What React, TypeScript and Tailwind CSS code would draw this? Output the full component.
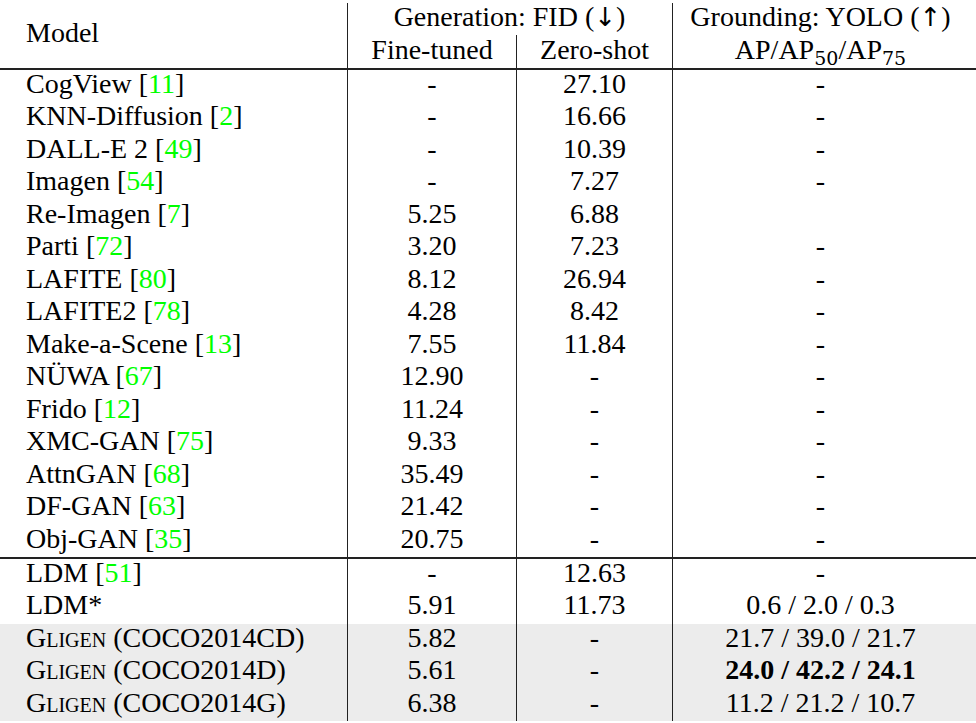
import React from 'react';

type Row = {
  name: React.ReactNode;
  cite?: string;
  fine: string;
  zero: string;
  ground: string;
  bold?: boolean;
};

const baselines: Row[] = [
  { name: 'CogView', cite: '11', fine: '-', zero: '27.10', ground: '-' },
  { name: 'KNN-Diffusion', cite: '2', fine: '-', zero: '16.66', ground: '-' },
  { name: 'DALL-E 2', cite: '49', fine: '-', zero: '10.39', ground: '-' },
  { name: 'Imagen', cite: '54', fine: '-', zero: '7.27', ground: '-' },
  { name: 'Re-Imagen', cite: '7', fine: '5.25', zero: '6.88', ground: '' },
  { name: 'Parti', cite: '72', fine: '3.20', zero: '7.23', ground: '-' },
  { name: 'LAFITE', cite: '80', fine: '8.12', zero: '26.94', ground: '-' },
  { name: 'LAFITE2', cite: '78', fine: '4.28', zero: '8.42', ground: '-' },
  { name: 'Make-a-Scene', cite: '13', fine: '7.55', zero: '11.84', ground: '-' },
  { name: 'NÜWA', cite: '67', fine: '12.90', zero: '-', ground: '-' },
  { name: 'Frido', cite: '12', fine: '11.24', zero: '-', ground: '-' },
  { name: 'XMC-GAN', cite: '75', fine: '9.33', zero: '-', ground: '-' },
  { name: 'AttnGAN', cite: '68', fine: '35.49', zero: '-', ground: '-' },
  { name: 'DF-GAN', cite: '63', fine: '21.42', zero: '-', ground: '-' },
  { name: 'Obj-GAN', cite: '35', fine: '20.75', zero: '-', ground: '-' },
];

const ldm: Row[] = [
  { name: 'LDM', cite: '51', fine: '-', zero: '12.63', ground: '-' },
  { name: 'LDM*', fine: '5.91', zero: '11.73', ground: '0.6 / 2.0 / 0.3' },
];

const ours: Row[] = [
  { name: <><span className="[font-variant:small-caps]">Gligen</span> (COCO2014CD)</>, fine: '5.82', zero: '-', ground: '21.7 / 39.0 / 21.7' },
  { name: <><span className="[font-variant:small-caps]">Gligen</span> (COCO2014D)</>, fine: '5.61', zero: '-', ground: '24.0 / 42.2 / 24.1', bold: true },
  { name: <><span className="[font-variant:small-caps]">Gligen</span> (COCO2014G)</>, fine: '6.38', zero: '-', ground: '11.2 / 21.2 / 10.7' },
];

function TableRow({ row, shaded }: { row: Row; shaded?: boolean }) {
  return (
    <div
      className={`grid grid-cols-[348px_169px_156px_303px] h-[32.5px] leading-[27px] ${shaded ? 'bg-[#ececec]' : ''}`}
    >
      <div className="pl-[26px] border-r-[1.5px] border-[#222] whitespace-nowrap">
        {row.name}
        {row.cite && (
          <>
            {' '}[<span className="text-[#00ff00]">{row.cite}</span>]
          </>
        )}
      </div>
      <div className="text-center border-r-[1.5px] border-[#222]">{row.fine}</div>
      <div className="text-center border-r-[1.5px] border-[#222]">{row.zero}</div>
      <div className={`text-center pr-[8px] ${row.bold ? 'font-bold' : ''}`}>{row.ground}</div>
    </div>
  );
}

function Arrow({ children }: { children: React.ReactNode }) {
  return <span className="font-['DejaVu_Sans',sans-serif] text-[26px]">{children}</span>;
}

export default function App() {
  return (
    <div className="w-[976px] h-[723px] bg-white text-black font-['Liberation_Serif','DejaVu_Serif',serif] text-[28px] pt-[3px] overflow-hidden">
      {/* Header */}
      <div className="grid grid-cols-[348px_169px_156px_303px] grid-rows-[32px_33px] leading-[27px]">
        <div className="row-span-2 pl-[26px] border-r-[1.5px] border-[#222] flex items-center pb-[6px]">Model</div>
        <div className="col-span-2 text-center border-r-[1.5px] border-[#222] pr-[1px]">
          Generation: FID (<Arrow>↓</Arrow>)
        </div>
        <div className="text-center pr-[8px]">
          Grounding: YOLO (<Arrow>↑</Arrow>)
        </div>
        <div className="text-center border-r-[1.5px] border-[#222] pt-[1px]">Fine-tuned</div>
        <div className="text-center border-r-[1.5px] border-[#222] pt-[1px]">Zero-shot</div>
        <div className="text-center pr-[8px] pt-[1px]">
          AP/AP<span className="text-[19px] align-[-6px] font-['DejaVu_Serif',serif]">50</span>/AP
          <span className="text-[19px] align-[-6px] font-['DejaVu_Serif',serif]">75</span>
        </div>
      </div>
      <div className="h-[1.5px] bg-[#222]" />

      {baselines.map((r, i) => (
        <TableRow key={i} row={r} />
      ))}
      <div className="h-[1.5px] bg-[#222]" />

      {ldm.map((r, i) => (
        <TableRow key={i} row={r} />
      ))}
      {ours.map((r, i) => (
        <TableRow key={i} row={r} shaded />
      ))}
    </div>
  );
}
